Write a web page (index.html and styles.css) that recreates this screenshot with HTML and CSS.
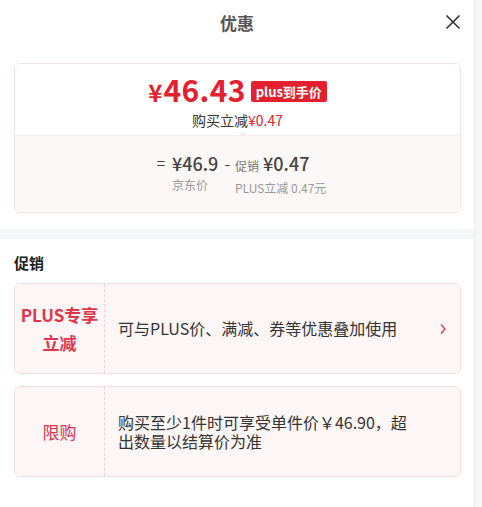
FILE: index.html
```html
<!DOCTYPE html>
<html lang="zh-CN">
<head>
    <meta charset="UTF-8">
    <meta name="viewport" content="width=device-width, initial-scale=1.0">
    <title>优惠</title>
    <link rel="stylesheet" href="styles.css">
</head>
<body>
    <div class="sheet">
        <header class="sheet-header">
            <h1>优惠</h1>
            <button class="close" aria-label="关闭">
                <svg width="16" height="16" viewBox="0 0 16 16"><path d="M1.5 1.5 L14.5 14.5 M14.5 1.5 L1.5 14.5" stroke="#333" stroke-width="1.6" fill="none"/></svg>
            </button>
        </header>

        <div class="price-card">
            <div class="price-top">
                <div class="price-line">
                    <span class="price"><span class="yen">¥</span>46.43</span>
                    <span class="badge">plus到手价</span>
                </div>
                <div class="save-line">购买立减<span class="red">¥0.47</span></div>
            </div>
            <div class="price-bottom">
                <div class="formula">
                    <span class="op">=</span>
                    <div class="term">
                        <span class="num">¥46.9</span>
                        <span class="label">京东价</span>
                    </div>
                    <span class="op minus">-</span>
                    <div class="term">
                        <span class="num"><small>促销</small> ¥0.47</span>
                        <span class="label">PLUS立减 0.47元</span>
                    </div>
                </div>
            </div>
        </div>

        <div class="band"></div>

        <section class="promo">
            <h2>促销</h2>
            <div class="promo-item">
                <div class="promo-tag bold">PLUS专享<br>立减</div>
                <div class="promo-text">可与PLUS价、满减、券等优惠叠加使用</div>
                <span class="arrow">
                    <svg width="8" height="12" viewBox="0 0 8 12"><path d="M2 1.5 L6 6 L2 10.5" stroke="#e0344a" stroke-width="1.3" fill="none"/></svg>
                </span>
            </div>
            <div class="promo-item">
                <div class="promo-tag">限购</div>
                <div class="promo-text narrow">购买至少1件时可享受单件价￥46.90，超出数量以结算价为准</div>
            </div>
        </section>
    </div>
</body>
</html>
```

FILE: styles.css
```css
body {
    margin: 0;
    padding: 0;
    background-color: #f6f6f6;
    font-family: "Noto Sans CJK SC", "Noto Sans", sans-serif;
    color: #333;
}
.sheet {
    width: 474px;
    height: 507px;
    background-color: #fff;
    border-right: 1px solid #ececec;
    overflow: hidden;
}
.sheet-header {
    height: 44px;
    display: flex;
    align-items: center;
    justify-content: center;
    position: relative;
}
.sheet-header h1 {
    margin: 0;
    font-size: 17px;
    font-weight: 700;
    color: #555;
}
.close {
    position: absolute;
    right: 13px;
    top: 14px;
    border: none;
    background: none;
    padding: 0;
    width: 16px;
    height: 16px;
    cursor: pointer;
}
.price-card {
    margin: 19px 13px 0 14px;
    border: 1px solid #f3e3e6;
    border-radius: 6px;
    overflow: hidden;
}
.price-top {
    height: 71px;
    display: flex;
    flex-direction: column;
    align-items: center;
    border-bottom: 1px solid #f6eaec;
    position: relative;
    background-color: #fff;
}
.price-top::after {
    content: "";
    position: absolute;
    left: 223px;
    bottom: -1px;
    border-left: 5px solid transparent;
    border-right: 5px solid transparent;
    border-bottom: 4px solid #f6eaec;
}
.price-line {
    display: flex;
    align-items: center;
    gap: 5px;
    margin-top: 8px;
    height: 36px;
}
.price {
    color: #e4202e;
    font-size: 30px;
    font-weight: 700;
    letter-spacing: 0.3px;
    line-height: 36px;
}
.yen {
    font-size: 24px;
    margin-right: 1px;
}
.badge {
    background-color: #e4202e;
    color: #fff;
    font-size: 13px;
    font-weight: 700;
    line-height: 21px;
    padding: 0 5px;
    border-radius: 2px;
    margin-top: 2px;
}
.save-line {
    font-size: 14px;
    line-height: 20px;
    margin-top: 2px;
}
.red {
    color: #e4202e;
}
.price-bottom {
    height: 76px;
    background-color: #fdf8f8;
    display: flex;
    justify-content: center;
}
.formula {
    display: flex;
    align-items: flex-start;
    margin-top: 15px;
    margin-left: 8px;
}
.op {
    font-size: 15px;
    color: #444;
    line-height: 24px;
    margin-right: 7px;
}
.op.minus {
    margin: 0 5px 0 6px;
    font-size: 16px;
}
.term {
    display: flex;
    flex-direction: column;
    align-items: flex-start;
}
.num {
    font-size: 18px;
    line-height: 24px;
    font-weight: 500;
    color: #444;
}
.num small {
    font-size: 12px;
    font-weight: 400;
    color: #777;
}
.label {
    font-size: 12px;
    color: #999;
    line-height: 20px;
    margin-top: 0;
}
.band {
    height: 10px;
    margin-top: 16px;
    background-color: #f5f7fb;
}
.promo {
    padding: 0 13px 0 14px;
}
.promo h2 {
    margin: 12px 0 8px;
    font-size: 15px;
    font-weight: 700;
    line-height: 24px;
    color: #222;
}
.promo-item {
    display: flex;
    align-items: center;
    height: 89px;
    margin-bottom: 12px;
    background-color: #fdf6f6;
    border: 1px solid #f3dfe3;
    border-radius: 6px;
}
.promo-tag {
    width: 89px;
    height: 100%;
    flex-shrink: 0;
    display: flex;
    align-items: center;
    justify-content: center;
    text-align: center;
    border-right: 1px dashed #efcfd5;
    color: #e0344a;
    font-size: 17px;
    line-height: 28px;
}
.promo-tag.bold {
    font-weight: 600;
}
.promo-text {
    flex: 1;
    padding-left: 13px;
    font-size: 16px;
    line-height: 19px;
    color: #333;
}
.promo-text.narrow {
    max-width: 292px;
    flex: none;
}
.arrow {
    width: 8px;
    margin-right: 13px;
    display: flex;
}
```
